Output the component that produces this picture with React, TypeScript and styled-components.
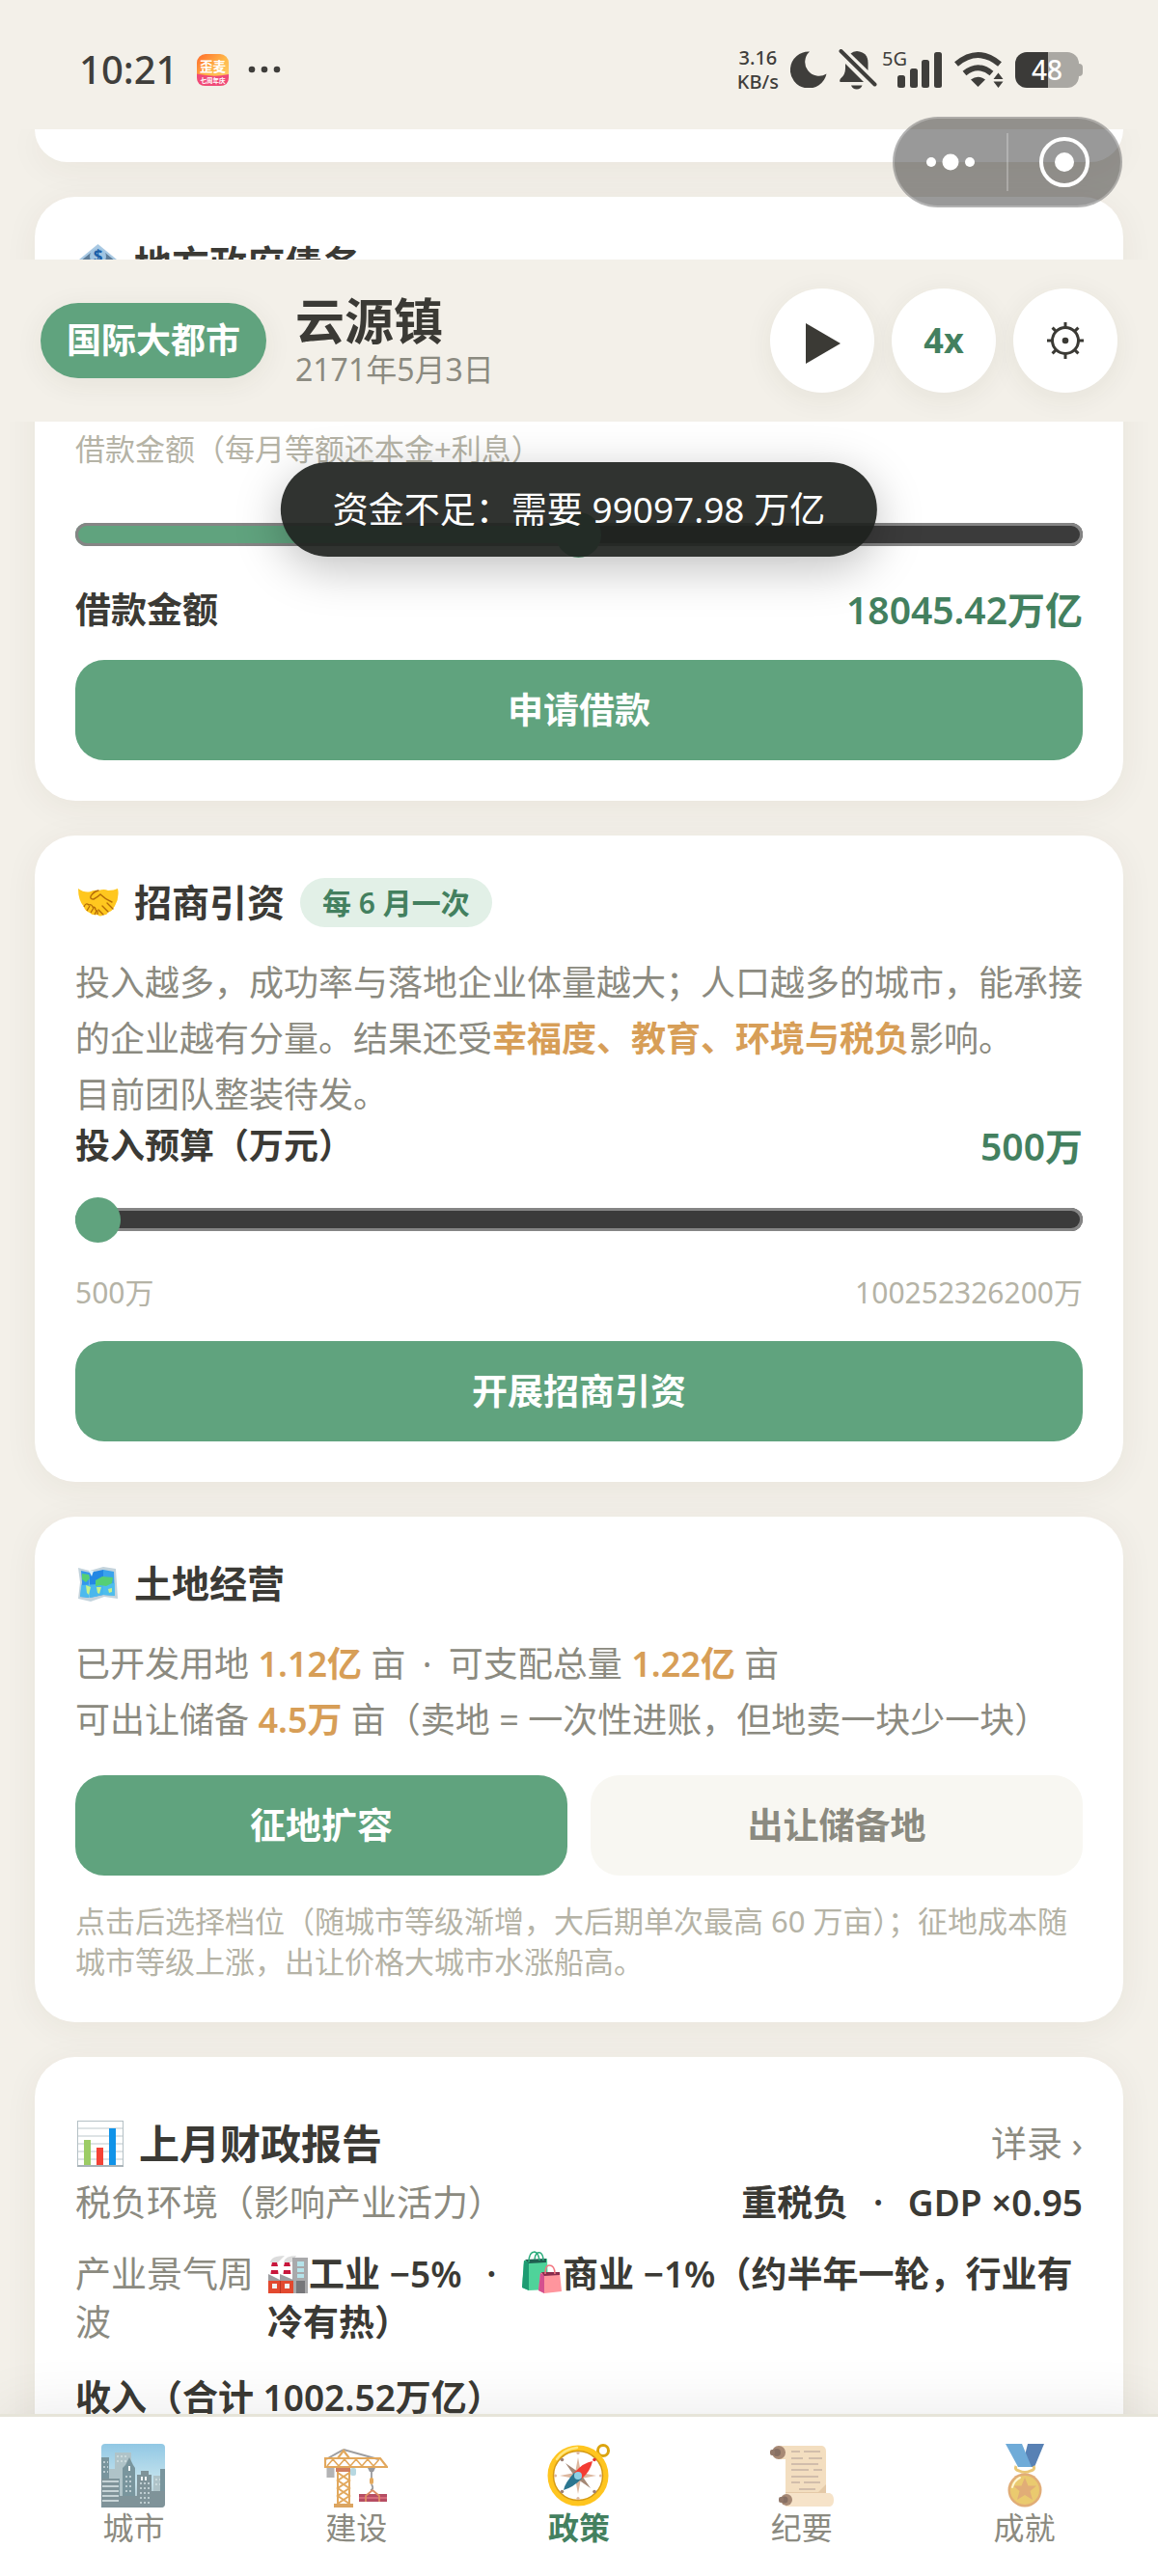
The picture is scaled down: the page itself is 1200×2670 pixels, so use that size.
import React, { useState } from "react";
import styled, { createGlobalStyle } from "styled-components";

const color = {
  page: "#f3f0e9",
  card: "#ffffff",
  ink: "#3b3a35",
  muted: "#8b8a80",
  faint: "#b5b3a6",
  green: "#60a37e",
  greenDeep: "#43805f",
  greenSoft: "#e2f0e7",
  amber: "#d79e57",
  soft: "#f8f7f2",
};

const GlobalStyle = createGlobalStyle`
  *, *::before, *::after { box-sizing: border-box; }
  body { margin: 0; background: ${color.page}; }
  button, input { font: inherit; }
  button { border: 0; padding: 0; background: none; color: inherit; cursor: pointer; }
  h1, h2, p { margin: 0; font-weight: inherit; }
`;

/* ---------- frame ---------- */

const Screen = styled.div`
  position: relative;
  display: flex;
  flex-direction: column;
  height: 100vh;
  overflow: hidden;
  background: ${color.page};
  color: ${color.ink};
  font-family: "Noto Sans", "Noto Sans CJK SC", sans-serif;
  font-size: 36px;
  line-height: 48px;
`;

const StatusBar = styled.div`
  flex: none;
  display: flex;
  align-items: center;
  justify-content: space-between;
  padding: 57px 78px 47px 82px;
  color: #3f3e3b;
`;

const StatusGroup = styled.div<{ $gap: number }>`
  display: flex;
  align-items: center;
  gap: ${(p) => p.$gap}px;
  height: 30px;
`;

const Clock = styled.span`
  font-family: "Noto Sans", sans-serif;
  font-size: 40px;
  font-weight: 500;
`;

const NetSpeed = styled.span`
  font-size: 20px;
  line-height: 25px;
  font-weight: 500;
  text-align: center;
`;

const Signal = styled.span`
  display: flex;
  align-items: flex-start;
  margin-left: -7px;
`;

const SignalLabel = styled.span`
  margin: -4px -10px 0 0;
  font-size: 20px;
  line-height: 24px;
`;

const Battery = styled.span`
  display: flex;
  align-items: center;
`;

const BatteryBody = styled.span`
  width: 66px;
  height: 37px;
  border-radius: 12px;
  background: linear-gradient(90deg, #3b3a38 52%, #aaa8a3 52%);
  color: #fff;
  font-size: 28px;
  line-height: 37px;
  font-weight: 500;
  text-align: center;
`;

const BatteryTip = styled.span`
  width: 4px;
  height: 13px;
  border-radius: 0 4px 4px 0;
  background: #aaa8a3;
`;

const Capsule = styled.div`
  position: absolute;
  z-index: 5;
  top: 121px;
  right: 37px;
  display: flex;
  align-items: center;
  width: 238px;
  height: 94px;
  border: 2px solid rgba(255, 255, 255, 0.25);
  border-radius: 47px;
  background: rgba(0, 0, 0, 0.4);
`;

const CapsuleButton = styled.button`
  flex: 1;
  display: flex;
  align-items: center;
  justify-content: center;
  height: 60px;
  & + & {
    border-left: 2px solid rgba(255, 255, 255, 0.25);
  }
`;

const TopBar = styled.header`
  position: absolute;
  z-index: 3;
  top: 269px;
  left: 0;
  right: 0;
  display: flex;
  align-items: center;
  padding: 30px 42px;
  background: ${color.page};
`;

const LevelBadge = styled.span`
  padding: 0 27px;
  border-radius: 39px;
  background: ${color.green};
  color: #fff;
  font-weight: 600;
  line-height: 78px;
  box-shadow: 0 6px 30px rgba(60, 50, 30, 0.07);
`;

const Place = styled.div`
  flex: 1;
  padding: 6px 0 0 30px;
`;

const PlaceName = styled.h1`
  font-size: 51px;
  line-height: 54px;
  font-weight: 600;
`;

const PlaceDate = styled.p`
  font-size: 32px;
  line-height: 48px;
  color: ${color.muted};
`;

const RoundButtons = styled.div`
  display: flex;
  gap: 18px;
`;

const RoundButton = styled.button`
  display: flex;
  align-items: center;
  justify-content: center;
  width: 108px;
  height: 108px;
  border-radius: 50%;
  background: ${color.card};
  color: ${color.greenDeep};
  font-weight: 700;
  box-shadow: 0 6px 30px rgba(60, 50, 30, 0.07);
`;

const Toast = styled.div`
  position: absolute;
  z-index: 4;
  top: 479px;
  left: 50%;
  transform: translateX(-50%);
  padding: 25px 54px;
  border-radius: 49px;
  background: rgba(30, 34, 30, 0.92);
  color: #fff;
  font-size: 37px;
  white-space: nowrap;
  box-shadow: 0 12px 48px rgba(0, 0, 0, 0.25);
`;

/* ---------- cards ---------- */

const Feed = styled.main`
  flex: 1;
  min-height: 0;
  display: flex;
  flex-direction: column;
  gap: 36px;
  padding: 0 36px;
  overflow: hidden;
`;

const Card = styled.section`
  flex: none;
  padding: 42px;
  border-radius: 42px;
  background: ${color.card};
  box-shadow: 0 6px 36px rgba(60, 50, 20, 0.06);
`;

const CardTail = styled(Card)`
  padding: 34px 0 0;
  border-radius: 0 0 42px 42px;
`;

const TitleRow = styled.div`
  display: flex;
  align-items: center;
  gap: 16px;
  height: 54px;
  padding-left: 2px;
`;

const Title = styled.h2`
  font-size: 39px;
  line-height: 54px;
  font-weight: 600;
`;

const Pill = styled.span`
  padding: 0 23px;
  border-radius: 26px;
  background: ${color.greenSoft};
  color: ${color.greenDeep};
  font-size: 30px;
  line-height: 51px;
  font-weight: 600;
`;

const Body = styled.p`
  margin-top: 28px;
  line-height: 58px;
  color: ${color.muted};
`;

const Accent = styled.strong`
  color: ${color.amber};
  font-weight: 600;
`;

const Dot = styled.span<{ $pad: number }>`
  padding: 0 ${(p) => p.$pad}px;
`;

const Hint = styled.p<{ $top: number }>`
  margin-top: ${(p) => p.$top}px;
  font-size: 31px;
  line-height: 42px;
  color: ${color.faint};
`;

const LabelRow = styled.div`
  display: flex;
  align-items: center;
  justify-content: space-between;
`;

const SliderLabel = styled.label<{ $large?: boolean }>`
  font-size: ${(p) => (p.$large ? 37 : 36)}px;
  font-weight: 600;
`;

const SliderValue = styled.output`
  font-size: 39px;
  font-weight: 600;
  color: ${color.greenDeep};
`;

const RangeEnds = styled.div`
  display: flex;
  justify-content: space-between;
  font-size: 30px;
  line-height: 44px;
  color: ${color.faint};
`;

const Slider = styled.input<{ $top: number }>`
  appearance: none;
  display: block;
  width: 100%;
  height: 24px;
  margin: ${(p) => p.$top}px 0 42px;
  border-radius: 12px;
  background: linear-gradient(90deg, ${color.green} var(--fill), #3b3b3b var(--fill));
  box-shadow: inset 0 0 0 3px #858585;
  &::-webkit-slider-thumb {
    appearance: none;
    width: 47px;
    height: 47px;
    border-radius: 50%;
    background: ${color.green};
  }
`;

const Button = styled.button<{ $quiet?: boolean }>`
  display: block;
  width: 100%;
  height: 104px;
  margin-top: 28px;
  border-radius: 30px;
  background: ${(p) => (p.$quiet ? color.soft : color.green)};
  color: ${(p) => (p.$quiet ? color.muted : "#fff")};
  font-size: 37px;
  font-weight: 600;
`;

const ButtonPair = styled.div`
  display: grid;
  grid-template-columns: 1fr 1fr;
  gap: 24px;
`;

const ReportHead = styled.div`
  display: flex;
  align-items: center;
  justify-content: space-between;
  margin-top: 24px;
  padding-left: 2px;
`;

const ReportTitle = styled.h2`
  display: flex;
  align-items: center;
  gap: 16px;
  font-size: 42px;
  font-weight: 600;
`;

const MoreLink = styled.a`
  font-size: 37px;
  color: ${color.muted};
  text-decoration: none;
`;

const ReportRow = styled.div`
  display: flex;
  justify-content: space-between;
  gap: 14px;
  padding: 12px 0;
  font-size: 37px;
  line-height: 50px;
`;

const RowLabel = styled.span<{ $chars?: number }>`
  flex: none;
  width: ${(p) => (p.$chars ? `${p.$chars}em` : "auto")};
  color: ${color.muted};
`;

const RowValue = styled.span`
  font-weight: 600;
`;

const Subtotal = styled.p`
  margin-top: 4px;
  padding: 12px 0;
  font-size: 37px;
  line-height: 50px;
  font-weight: 600;
`;

/* ---------- tab bar ---------- */

const TabBar = styled.nav`
  position: relative;
  z-index: 3;
  flex: none;
  display: flex;
  padding: 28px 23px 29px;
  border-top: 3px solid #e6e4d9;
  background: ${color.card};
  box-shadow: 0 -6px 60px rgba(0, 0, 0, 0.08);
`;

const Tab = styled.button<{ $active: boolean }>`
  flex: 1;
  display: flex;
  flex-direction: column;
  align-items: center;
  height: 108px;
  font-size: 32px;
  line-height: 42px;
  color: ${(p) => (p.$active ? color.greenDeep : color.muted)};
  font-weight: ${(p) => (p.$active ? 600 : 400)};
  svg {
    opacity: ${(p) => (p.$active ? 1 : 0.75)};
  }
`;

/* ---------- drawings ---------- */

const inlineIcon: React.CSSProperties = { verticalAlign: "-6px" };

const AppIcon = () => (
  <svg width="33" height="33" viewBox="0 0 66 66" aria-hidden="true">
    <defs>
      <linearGradient id="app" x1="0" y1="0" x2="1" y2="1">
        <stop offset="0" stopColor="#ff6a2a" />
        <stop offset="0.5" stopColor="#ffb648" />
        <stop offset="1" stopColor="#ffd777" />
      </linearGradient>
    </defs>
    <rect width="66" height="66" rx="18" fill="url(#app)" />
    <path d="M0 41 Q34 49 66 42 V48 Q66 66 48 66 H18 Q0 66 0 48Z" fill="#f04a78" />
    <text x="33" y="36" fontSize="27" fontWeight="700" textAnchor="middle" fill="#fff">歪麦</text>
    <text x="33" y="60" fontSize="13" fontWeight="700" textAnchor="middle" fill="#fff">七周年庆</text>
  </svg>
);

const Dots = () => (
  <svg width="34" height="8" viewBox="0 0 34 8" fill="#3f3e3b" aria-hidden="true">
    <circle cx="4" cy="4" r="3.3" />
    <circle cx="17" cy="4" r="3.3" />
    <circle cx="30" cy="4" r="3.3" />
  </svg>
);

const Moon = () => (
  <svg width="38" height="38" viewBox="0 0 38 38" fill="#3f3e3b" aria-hidden="true">
    <path d="M20 0.500A19 19 0 1 0 37.500 23.500A14.500 14.500 0 0 1 20 0.500Z" />
  </svg>
);

const BellOff = () => (
  <svg width="40" height="42" viewBox="0 0 40 42" fill="#3f3e3b" aria-hidden="true">
    <path d="M12.500 4.500Q15 2 19 2Q30.500 3 30.500 14V22Z" />
    <path d="M7 15L26 34H1.500Q0.500 32 2 30.500Q7 26.500 7 20Z" />
    <path d="M13 37.500H24.500Q23 41.500 18.800 41.500Q14.500 41.500 13 37.500Z" />
    <path d="M2.500 2L37.500 36.500" stroke="#3f3e3b" strokeWidth="4" strokeLinecap="round" />
  </svg>
);

const Bars = () => (
  <svg width="47" height="38" viewBox="0 0 47 38" fill="#3f3e3b" aria-hidden="true">
    <rect x="0" y="25" width="8" height="13" rx="2.500" />
    <rect x="13" y="18" width="8" height="20" rx="2.500" />
    <rect x="25" y="9" width="8" height="29" rx="2.500" />
    <rect x="38" y="1" width="8" height="37" rx="2.500" />
  </svg>
);

const Wifi = () => (
  <svg width="51" height="38" viewBox="0 0 51 38" aria-hidden="true">
    <g fill="none" stroke="#3f3e3b" strokeWidth="6">
      <path d="M2 13.500Q24.500 -5.500 47 13.500" />
      <path d="M10.500 23Q24.500 11.500 38.500 23" />
    </g>
    <path d="M17 29.500Q24.500 24 32 29.500L24.500 37Z" fill="#3f3e3b" />
    <path d="M40.500 29L45.500 22.500L50.500 29ZM40.500 31.500L45.500 38L50.500 31.500Z" fill="#3f3e3b" />
  </svg>
);

const MoreDots = () => (
  <svg width="52" height="18" viewBox="0 0 52 18" fill="#fff" aria-hidden="true">
    <circle cx="6" cy="9" r="5" />
    <circle cx="26" cy="9" r="8.500" />
    <circle cx="46" cy="9" r="5" />
  </svg>
);

const Target = () => (
  <svg width="54" height="54" viewBox="0 0 54 54" aria-hidden="true">
    <circle cx="27" cy="27" r="24" fill="none" stroke="#fff" strokeWidth="4" />
    <circle cx="27" cy="27" r="10" fill="#fff" />
  </svg>
);

const Play = () => (
  <svg width="38" height="48" viewBox="0 0 38 48" aria-hidden="true">
    <path d="M2 6L38 27L2 48Z" fill={color.ink} />
  </svg>
);

const Gear = () => (
  <svg width="38" height="38" viewBox="0 0 38 38" stroke={color.ink} fill="none" aria-hidden="true">
    <circle cx="19" cy="19" r="13.500" strokeWidth="3" />
    <circle cx="19" cy="19" r="3.300" fill={color.ink} stroke="none" />
    {[0, 45, 90, 135, 180, 225, 270, 315].map((a) => (
      <path key={a} d="M19 5V0" strokeWidth="3" transform={`rotate(${a} 19 19)`} />
    ))}
  </svg>
);

const Bank = () => (
  <svg width="43" height="43" viewBox="0 0 43 43" aria-hidden="true">
    <path d="M21.500 1L41 17V22H2V17Z" fill="#a9c9e3" />
    <path d="M3 19L14 10V19ZM40 19L29 10V19Z" fill="#5e7d99" />
    <rect x="5" y="22" width="33" height="18" fill="#b9d3e6" />
    <circle cx="21.500" cy="14" r="8.500" fill="#9fc4e2" />
    <text x="21.500" y="20" fontSize="17" fontWeight="700" textAnchor="middle" fill="#1b5fa8">$</text>
  </svg>
);

const Handshake = () => (
  <svg width="43" height="43" viewBox="0 0 43 43" aria-hidden="true">
    <path d="M1 7Q8 12 14 10Q18 8 22 9Q28 7 32 9Q38 9 42 7Q44 16 39 25L37 28Q35 32 32 31Q31 35 27 34Q24 37 21 34Q15 35 13 32Q8 30 7 26Q1 19 1 7Z" fill="#ffc71f" />
    <path d="M7 26Q9 21 12 24Q15 23 16 26Q19 26 19 29Q22 30 21 34" fill="none" stroke="#b56b08" strokeWidth="1.300" />
    <path d="M10 30L13 25M14 32L17 27M18 34L20 30" stroke="#b56b08" strokeWidth="1.300" />
    <path d="M22 9Q17 10 14 15Q13 18 17 18Q21 16 24 13Q29 18 36 21M37 28L31 22M32 31L26 25M27 34L22 29" fill="none" stroke="#b56b08" strokeWidth="1.400" strokeLinecap="round" />
  </svg>
);

const WorldMap = () => (
  <svg width="43" height="43" viewBox="0 0 43 43" aria-hidden="true">
    <path d="M1 5L13 8L27 4L40 6L42 37L28 35L14 40L1 37L3 20Z" fill="#c3d3dc" />
    <path d="M4 8L13 10L12 36L3 35L5 20Z" fill="#3497ec" />
    <path d="M13 10L27 7V33L13 36Z" fill="#2387e4" />
    <path d="M27 7L38 9L39 34L27 33Z" fill="#3aa3ec" />
    <path d="M4 23L39 21V34L27 33L14 36L3 35Z" fill="#52c3ee" opacity="0.8" />
    <path d="M5 11L12 12L13 16L9 20L5 17ZM19 18L26 14L37 15L36 21L30 24L24 23L19 24Z" fill="#55cf75" />
    <path d="M9 23L14 25L12 33L10 31ZM20 25L25 25L23 32L21 31ZM32 27L36 26V30L33 31Z" fill="#c4f28a" />
    <path d="M13 10L12 8L17 8L15 14Z" fill="#dff3fb" />
  </svg>
);

const Chart = () => (
  <svg width="48" height="48" viewBox="0 0 48 48" aria-hidden="true">
    <rect x="0.500" y="0.500" width="47" height="47" fill="#fff" stroke="#b4c0c5" />
    <path d="M1 8H47M1 16H47M1 24H47M1 32H47M1 40H47" stroke="#d4dadd" strokeWidth="1.500" />
    <rect x="7" y="20" width="7" height="27" fill="#9ccc65" />
    <rect x="20" y="28" width="7" height="19" fill="#f44336" />
    <rect x="33" y="8" width="7" height="39" fill="#1193e8" />
    <path d="M0 47H48" stroke="#a9b3b8" strokeWidth="2" />
  </svg>
);

const Factory = () => (
  <svg width="43" height="40" viewBox="0 0 43 40" style={inlineIcon} aria-hidden="true">
    <path d="M3 8Q4 1 18 1Q14 5 11 8ZM17 8Q18 1 30 1Q28 5 25 8Z" fill="#dcdcdc" />
    <path d="M5 8H10L12 24H3ZM18 8H23L25 24H16Z" fill="#fff" />
    <path d="M5 8H10L11 12H4ZM4 16H11L11.500 20H3.500ZM18 8H23L24 12H17ZM17 16H24L24.500 20H16.500Z" fill="#c8173c" />
    <rect x="26" y="3" width="16" height="37" fill="#a9a9ab" />
    <path d="M31 7H38V12H31ZM31 14H38V18H31ZM31 20H38V24H31Z" fill="#b5e3ea" />
    <rect x="30" y="27" width="9" height="13" fill="#77777a" />
    <path d="M1 20L13 26V20L27 26V30H1Z" fill="#9d9da1" />
    <path d="M1 27H27V40H1Z" fill="#e2492f" />
    <path d="M13.500 27V40" stroke="#b93421" />
    <rect x="5" y="30" width="5" height="5" fill="#f2f2f2" />
    <rect x="18" y="30" width="5" height="5" fill="#f2f2f2" />
  </svg>
);

const Bags = () => (
  <svg width="43" height="44" viewBox="0 0 43 44" style={inlineIcon} aria-hidden="true">
    <path d="M3 10L27 8L28 40L8 41L1 38Z" fill="#4fd39a" />
    <path d="M3 10L8 12L8 41L1 38Z" fill="#1d9c72" />
    <path d="M4 9L26 8V12L8 13Z" fill="#1f5f50" />
    <path d="M8 12Q8 1 14 1Q18 2 19 10M14 9Q15 0 20 2Q23 4 23 10" fill="none" stroke="#2bab7b" strokeWidth="1.500" />
    <path d="M20 23L40 22L42 42L24 44L18 41Z" fill="#ff959d" />
    <path d="M20 23L24 25V44L18 41Z" fill="#d4508f" />
    <path d="M21 22L40 22V25L24 26Z" fill="#8a2c4d" />
    <path d="M25 24Q25 15 29 15Q35 15 35 24" fill="none" stroke="#f27680" strokeWidth="1.500" />
  </svg>
);

const City = () => (
  <svg width="66" height="66" viewBox="0 0 66 66" aria-hidden="true">
    <defs>
      <linearGradient id="sky" x1="0" y1="0" x2="0" y2="1">
        <stop offset="0" stopColor="#6db6dc" />
        <stop offset="0.6" stopColor="#b4dbe8" />
        <stop offset="1" stopColor="#8aa2ab" />
      </linearGradient>
    </defs>
    <rect width="66" height="66" rx="4" fill="url(#sky)" />
    <path d="M8 26H14V9H31V54H8ZM54 33H62V60H54Z" fill="#95b0b6" />
    <path d="M0 14H8V36H19V66H0ZM22 54V25L25 22L29 14L33 22L35 25V54ZM61 26H66V60H61Z" fill="#4d727d" />
    <path d="M19 54H37V32H41V28H49V32H52V49H66V62Q66 66 62 66H4Q0 66 0 62V36H18V54Z" fill="#557078" />
    <path d="M1 39H18M1 44H18M1 49H18M1 54H18M1 59H18" stroke="#d5e2e5" strokeWidth="1.500" />
    <path d="M25 34H33M25 39H33M25 44H33M25 49H33M40 41H50M40 46H50M40 51H50M40 56H50M40 61H50M16 13H28M16 18H28M2 19H7M2 24H7M2 29H7M56 37H61M56 42H61" stroke="#c5d6da" strokeWidth="1.500" strokeDasharray="2 2" />
    <path d="M29 23V28M42 34V38M46 34V38" stroke="#eef5f6" strokeWidth="2" />
  </svg>
);

const Crane = () => (
  <svg width="66" height="66" viewBox="0 0 66 66" fill="none" aria-hidden="true">
    <path d="M20 6L2 16M20 6L56 16" stroke="#7d7d80" strokeWidth="2" />
    <rect x="2.500" y="25" width="8" height="10" fill="#9a9a9c" />
    <path d="M1 15H58L65 24H1ZM14 15L20 7L26 15" stroke="#d98c28" strokeWidth="2.200" />
    <path d="M3 23L9 16L15 23L21 16L27 23L33 16L39 23L45 16L51 23L57 16" stroke="#d98c28" strokeWidth="1.600" />
    <rect x="12" y="25" width="15" height="4" fill="#c1542a" />
    <rect x="27" y="25" width="6" height="8" rx="2" fill="#9fccd8" />
    <path d="M14 29V63M26 29V63M14 30L26 38L14 46L26 54L14 62M26 30L14 38L26 46L14 54L26 62" stroke="#d98c28" strokeWidth="2" />
    <rect x="10" y="62" width="20" height="4" fill="#d0862c" />
    <path d="M45 25H53L51 29H47Z" fill="#77777b" />
    <path d="M49 28V37M49 42Q52 47 48 48" stroke="#77777b" strokeWidth="1.800" />
    <rect x="47" y="35" width="4" height="7" rx="2" fill="#d98c28" />
    <path d="M36 52H65V60H36Z" fill="#9e1230" />
    <path d="M36 56H65" stroke="#c83a50" strokeWidth="2" />
    <path d="M50 48L43 54V60M50 48L57 54V60" stroke="#d46a30" strokeWidth="1.800" />
  </svg>
);

const Compass = () => (
  <svg width="66" height="66" viewBox="0 0 66 66" aria-hidden="true">
    <circle cx="58" cy="7" r="5.500" fill="none" stroke="#dba40f" strokeWidth="3" />
    <circle cx="32" cy="33" r="28.500" fill="#fff" stroke="#ffc51f" strokeWidth="6" />
    <circle cx="32" cy="33" r="25.500" fill="none" stroke="#d59a16" strokeWidth="1.500" />
    <path d="M10 16Q18 5 31 4" stroke="#ffe780" strokeWidth="2.500" fill="none" strokeLinecap="round" />
    <path d="M32 14L35 30L51 33L35 36L32 52L29 36L13 33L29 30Z" fill="#dcb79f" />
    <path d="M19 20L32 29L28 33ZM45 46L36 33L32 37Z" fill="#a48876" />
    <path d="M28 30Q38 19 47 18Q45 28 36 36Z" fill="#f33c33" />
    <path d="M28 30Q18 41 17 48Q27 45 36 36Z" fill="#2b7690" />
    <circle cx="32" cy="33" r="4" fill="#8fd0e4" />
    <g fill="#9d8175">
      <circle cx="15.500" cy="16.500" r="1.800" />
      <circle cx="49" cy="16.500" r="1.800" fill="#e5312d" />
      <circle cx="15.500" cy="49.500" r="1.800" />
      <circle cx="49" cy="49.500" r="1.800" />
    </g>
    <g fill="#dcb79f">
      <circle cx="32" cy="9.500" r="1.600" />
      <circle cx="32" cy="56.500" r="1.600" />
      <circle cx="8.500" cy="33" r="1.600" />
      <circle cx="55.500" cy="33" r="1.600" />
    </g>
  </svg>
);

const Scroll = () => (
  <svg width="66" height="66" viewBox="0 0 66 66" aria-hidden="true">
    <path d="M8 2H54Q58 3 58 8V54H16V16H8Z" fill="#f0d3ab" />
    <path d="M58 42V54H16V50H50Z" fill="#dcb88a" />
    <path d="M16 51H62Q66 53 66 58Q66 64 62 65H16Z" fill="#f3dab8" />
    <circle cx="9" cy="9" r="7" fill="#8a6248" />
    <circle cx="7" cy="9" r="4" fill="#5e4030" />
    <rect x="0" y="6" width="5" height="6" rx="2" fill="#6e4c39" />
    <circle cx="17" cy="58" r="6" fill="#8a6248" />
    <circle cx="15" cy="58" r="3.500" fill="#5e4030" />
    <rect x="9" y="55" width="5" height="6" rx="2" fill="#6e4c39" />
    <path d="M22 8H31M35 8H52M22 15H34M40 15H54M22 21H50M22 27H40M45 27H54M22 34H50M22 40H31M35 40H52M30 47H47" stroke="#b29a86" strokeWidth="1.500" />
  </svg>
);

const Medal = () => (
  <svg width="66" height="66" viewBox="0 0 66 66" aria-hidden="true">
    <path d="M36 0H53L43 24H30Z" fill="#21589c" />
    <path d="M13 0H30L40 24H26Z" fill="#3f8fcc" />
    <path d="M24 23Q22 27 27 28Q33 31 39 28Q44 27 42 23" fill="none" stroke="#e3b548" strokeWidth="3" />
    <circle cx="33" cy="48" r="17.500" fill="#d7924a" />
    <circle cx="33" cy="48" r="15" fill="#e4b93f" />
    <path d="M33 35L36.500 43.500H45L38.500 49L41 58L33 53L25 58L27.500 49L21 43.500H29.500Z" fill="#d7924a" />
    <path d="M20 45Q22 38 28 35" stroke="#fff3c4" strokeWidth="2" fill="none" strokeLinecap="round" />
  </svg>
);

/* ---------- data and page ---------- */

const tabs = [
  { name: "城市", Icon: City },
  { name: "建设", Icon: Crane },
  { name: "政策", Icon: Compass },
  { name: "纪要", Icon: Scroll },
  { name: "成就", Icon: Medal },
];

type RangeProps = {
  id: string;
  top: number;
  min: number;
  max: number;
  value: number;
  onChange: (value: number) => void;
};

const Range = ({ id, top, min, max, value, onChange }: RangeProps) => {
  const fill = `${((value - min) / (max - min)) * 100}%`;
  return (
    <Slider
      id={id}
      type="range"
      $top={top}
      min={min}
      max={max}
      value={value}
      onChange={(e) => onChange(Number(e.target.value))}
      style={{ "--fill": fill } as React.CSSProperties}
    />
  );
};

export default function App() {
  const [loan, setLoan] = useState(18045.42);
  const [budget, setBudget] = useState(500);
  const [tab, setTab] = useState("政策");

  return (
    <Screen lang="zh-CN">
      <GlobalStyle />
      <StatusBar>
        <StatusGroup $gap={20}>
          <Clock>10:21</Clock>
          <AppIcon />
          <Dots />
        </StatusGroup>
        <StatusGroup $gap={12}>
          <NetSpeed>
            3.16
            <br />
            KB/s
          </NetSpeed>
          <Moon />
          <BellOff />
          <Signal>
            <SignalLabel>5G</SignalLabel>
            <Bars />
          </Signal>
          <Wifi />
          <Battery>
            <BatteryBody>48</BatteryBody>
            <BatteryTip />
          </Battery>
        </StatusGroup>
      </StatusBar>

      <Capsule>
        <CapsuleButton aria-label="更多">
          <MoreDots />
        </CapsuleButton>
        <CapsuleButton aria-label="关闭">
          <Target />
        </CapsuleButton>
      </Capsule>

      <TopBar>
        <LevelBadge>国际大都市</LevelBadge>
        <Place>
          <PlaceName>云源镇</PlaceName>
          <PlaceDate>2171年5月3日</PlaceDate>
        </Place>
        <RoundButtons>
          <RoundButton aria-label="播放">
            <Play />
          </RoundButton>
          <RoundButton>4x</RoundButton>
          <RoundButton aria-label="设置">
            <Gear />
          </RoundButton>
        </RoundButtons>
      </TopBar>

      <Toast role="status">资金不足：需要 99097.98 万亿</Toast>

      <Feed>
        <CardTail />

        <Card>
          <TitleRow>
            <Bank />
            <Title>地方政府债务</Title>
          </TitleRow>
          <Hint $top={144}>借款金额（每月等额还本金+利息）</Hint>
          <Range id="loan" top={56} min={0} max={36090.84} value={loan} onChange={setLoan} />
          <LabelRow>
            <SliderLabel htmlFor="loan" $large>借款金额</SliderLabel>
            <SliderValue htmlFor="loan">{loan}万亿</SliderValue>
          </LabelRow>
          <Button>申请借款</Button>
        </Card>

        <Card>
          <TitleRow>
            <Handshake />
            <Title>招商引资</Title>
            <Pill>每 6 月一次</Pill>
          </TitleRow>
          <Body>
            投入越多，成功率与落地企业体量越大；人口越多的城市，能承接的企业越有分量。结果还受
            <Accent>幸福度、教育、环境与税负</Accent>影响。
            <br />
            目前团队整装待发。
          </Body>
          <LabelRow>
            <SliderLabel htmlFor="budget">投入预算（万元）</SliderLabel>
            <SliderValue htmlFor="budget">{budget}万</SliderValue>
          </LabelRow>
          <Range id="budget" top={40} min={500} max={100252326200} value={budget} onChange={setBudget} />
          <RangeEnds>
            <span>500万</span>
            <span>100252326200万</span>
          </RangeEnds>
          <Button>开展招商引资</Button>
        </Card>

        <Card>
          <TitleRow>
            <WorldMap />
            <Title>土地经营</Title>
          </TitleRow>
          <Body>
            已开发用地 <Accent>1.12亿</Accent> 亩 <Dot $pad={8}>·</Dot> 可支配总量 <Accent>1.22亿</Accent> 亩
            <br />
            可出让储备 <Accent>4.5万</Accent> 亩（卖地 = 一次性进账，但地卖一块少一块）
          </Body>
          <ButtonPair>
            <Button>征地扩容</Button>
            <Button $quiet>出让储备地</Button>
          </ButtonPair>
          <Hint $top={26}>
            点击后选择档位（随城市等级渐增，大后期单次最高 60 万亩）；征地成本随城市等级上涨，出让价格大城市水涨船高。
          </Hint>
        </Card>

        <Card>
          <ReportHead>
            <ReportTitle>
              <Chart />
              上月财政报告
            </ReportTitle>
            <MoreLink href="#report">详录 ›</MoreLink>
          </ReportHead>
          <ReportRow>
            <RowLabel>税负环境（影响产业活力）</RowLabel>
            <RowValue>
              重税负 <Dot $pad={16}>·</Dot> GDP ×0.95
            </RowValue>
          </ReportRow>
          <ReportRow>
            <RowLabel $chars={5}>产业景气周波</RowLabel>
            <RowValue>
              <Factory />
              工业 −5% <Dot $pad={16}>·</Dot> <Bags />
              商业 −1%（约半年一轮，行业有冷有热）
            </RowValue>
          </ReportRow>
          <Subtotal>收入（合计 1002.52万亿）</Subtotal>
        </Card>
      </Feed>

      <TabBar>
        {tabs.map(({ name, Icon }) => (
          <Tab key={name} $active={name === tab} onClick={() => setTab(name)}>
            <Icon />
            {name}
          </Tab>
        ))}
      </TabBar>
    </Screen>
  );
}
